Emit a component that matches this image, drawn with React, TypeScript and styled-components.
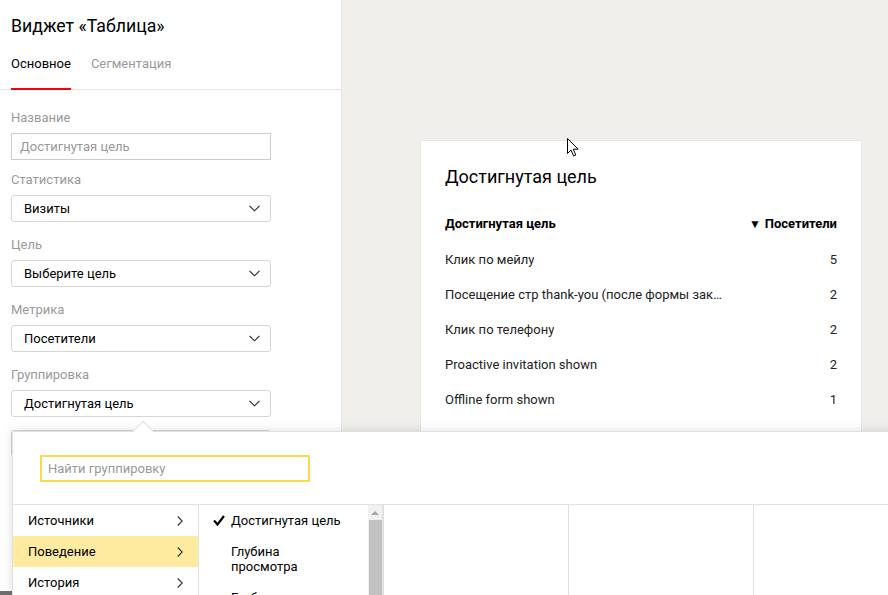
import React from 'react';
import styled, { createGlobalStyle } from 'styled-components';

const GlobalStyle = createGlobalStyle`
  html, body {
    margin: 0;
    padding: 0;
    overflow: hidden;
  }
  body {
    font-family: Roboto, "Liberation Sans", Arial, sans-serif;
    color: #000;
  }
  * {
    box-sizing: border-box;
  }
`;

const Page = styled.div`
  position: relative;
  display: flex;
  width: 888px;
  height: 595px;
  overflow: hidden;
`;

const Sidebar = styled.aside`
  display: flex;
  flex-direction: column;
  width: 342px;
  flex-shrink: 0;
  background: #fff;
  border-right: 1px solid #e6e6e6;
`;

const Title = styled.h1`
  margin: 0;
  padding: 16px 11px 0;
  font-size: 17.7px;
  line-height: 20px;
  font-weight: 400;
  color: #000;
`;

const Tabs = styled.div`
  display: flex;
  gap: 20px;
  padding: 0 11px;
  border-bottom: 1px solid #e6e6e6;
`;

const Tab = styled.div<{ $active?: boolean }>`
  padding: 18px 0 14px;
  margin-bottom: -1px;
  font-size: 13px;
  line-height: 20px;
  color: ${p => (p.$active ? '#000' : '#999')};
  border-bottom: 2px solid ${p => (p.$active ? '#f00' : 'transparent')};
`;

const Form = styled.div`
  padding: 18px 11px 0;
`;

const Field = styled.div<{ $gap?: number }>`
  display: flex;
  flex-direction: column;
  width: 260px;
  margin-bottom: ${p => p.$gap ?? 13}px;
`;

const Label = styled.div`
  font-size: 13px;
  line-height: 20px;
  color: #999;
  margin-bottom: 5px;
`;

const TextInput = styled.div`
  height: 27px;
  padding: 0 8px;
  border: 1px solid #ccc;
  font-size: 13px;
  line-height: 25px;
  color: #999;
`;

const Select = styled.div`
  display: flex;
  align-items: center;
  justify-content: space-between;
  height: 27px;
  padding: 0 10px 0 12px;
  border: 1px solid #d6d6d6;
  border-radius: 3px;
  font-size: 13px;
  color: #000;
`;

const SidebarFooter = styled.div`
  margin-top: auto;
  width: 12px;
  height: 4px;
  background: #6f6f6f;
`;

const Main = styled.main`
  flex: 1;
  background: #f0efec;
  padding: 141px 0 0 79px;
`;

const Card = styled.section`
  width: 440px;
  height: 320px;
  background: #fff;
  box-shadow: 0 0 0 1px #e8e7e4;
  padding: 24px 24px 0;
`;

const CardTitle = styled.h2`
  margin: 0 0 17px;
  font-size: 18px;
  line-height: 24px;
  font-weight: 400;
  color: #000;
`;

const Row = styled.div<{ $head?: boolean }>`
  display: flex;
  justify-content: space-between;
  align-items: center;
  height: 35px;
  font-size: 13px;
  font-weight: ${p => (p.$head ? 700 : 400)};
  color: ${p => (p.$head ? '#000' : '#222')};
  margin-bottom: ${p => (p.$head ? 1 : 0)}px;
`;

const NameCell = styled.span`
  max-width: 282px;
  white-space: nowrap;
  overflow: hidden;
  text-overflow: ellipsis;
`;

const SortMark = styled.span`
  font-size: 12px;
  margin-right: 4px;
`;

const Popup = styled.div`
  position: absolute;
  left: 12px;
  top: 431px;
  width: 1000px;
  bottom: -2px;
  background: #fff;
  border: 1px solid #e0e0e0;
  box-shadow: 0 0 10px rgba(0, 0, 0, 0.13);

  &::before {
    content: '';
    position: absolute;
    left: 122px;
    top: -8px;
    width: 15px;
    height: 15px;
    background: #fff;
    border-left: 1px solid #e0e0e0;
    border-top: 1px solid #e0e0e0;
    transform: rotate(45deg);
  }
`;

const SearchBar = styled.div`
  position: relative;
  height: 73px;
  padding: 23px 0 0 27px;
  border-bottom: 1px solid #e3e3e3;
  background: #fff;
`;

const SearchInput = styled.div`
  width: 270px;
  height: 27px;
  padding: 0 6px;
  border: 2px solid #fdd94c;
  font-size: 13px;
  line-height: 23px;
  color: #999;
`;

const Columns = styled.div`
  display: flex;
  height: 100%;
`;

const Column = styled.div<{ $border?: boolean }>`
  display: flex;
  width: 185px;
  flex-shrink: 0;
  border-left: ${p => (p.$border ? '1px solid #e0e0e0' : 'none')};
`;

const List = styled.div`
  flex: 1;
`;

const Category = styled.div<{ $active?: boolean }>`
  display: flex;
  align-items: center;
  justify-content: space-between;
  height: 31px;
  padding: 0 15px;
  font-size: 13px;
  color: #000;
  background: ${p => (p.$active ? '#ffeba0' : 'transparent')};
`;

const Option = styled.div`
  display: flex;
  align-items: flex-start;
  padding: 8px 8px 8px 14px;
  font-size: 13px;
  line-height: 15px;
  color: #000;
`;

const CheckSlot = styled.span`
  display: inline-flex;
  width: 18px;
  flex-shrink: 0;
  padding-top: 2px;
`;

const ScrollTrack = styled.div`
  display: flex;
  flex-direction: column;
  align-items: center;
  width: 15px;
  background: #f1f1f1;
  border-right: 1px solid #e0e0e0;
`;

const ScrollArrow = styled.div`
  margin: 6px 0 5px;
  width: 0;
  height: 0;
  border-left: 4px solid transparent;
  border-right: 4px solid transparent;
  border-bottom: 4px solid #a3a3a3;
`;

const ScrollThumb = styled.div`
  width: 13px;
  flex: 1;
  background: #c1c1c1;
`;

const Cursor = styled.svg`
  position: absolute;
  left: 567px;
  top: 138px;
`;

const Chevron = () => (
  <svg width="11" height="7" viewBox="0 0 11 7">
    <polyline points="0.5,0.8 5.5,5.8 10.5,0.8" fill="none" stroke="#222" strokeWidth="1.1" />
  </svg>
);

const ChevronRight = () => (
  <svg width="6" height="10" viewBox="0 0 6 10">
    <polyline points="0.7,0.5 5.2,5 0.7,9.5" fill="none" stroke="#333" strokeWidth="1.1" />
  </svg>
);

const Check = () => (
  <svg width="12" height="11" viewBox="0 0 12 11">
    <path d="M1 5.5 L4.5 9.5 L11 1" fill="none" stroke="#000" strokeWidth="2.2" />
  </svg>
);

const rows: [string, number][] = [
  ['Клик по мейлу', 5],
  ['Посещение стр thank-you (после формы заказа звонка)', 2],
  ['Клик по телефону', 2],
  ['Proactive invitation shown', 2],
  ['Offline form shown', 1],
];

const fields: { label: string; value: string }[] = [
  { label: 'Статистика', value: 'Визиты' },
  { label: 'Цель', value: 'Выберите цель' },
  { label: 'Метрика', value: 'Посетители' },
  { label: 'Группировка', value: 'Достигнутая цель' },
];

const App: React.FC = () => {
  return (
    <>
      <GlobalStyle />
      <Page>
        <Sidebar>
          <Title>Виджет «Таблица»</Title>
          <Tabs>
            <Tab $active>Основное</Tab>
            <Tab>Сегментация</Tab>
          </Tabs>
          <Form>
            <Field $gap={10}>
              <Label>Название</Label>
              <TextInput>Достигнутая цель</TextInput>
            </Field>
            {fields.map(f => (
              <Field key={f.label}>
                <Label>{f.label}</Label>
                <Select>
                  {f.value}
                  <Chevron />
                </Select>
              </Field>
            ))}
            <Field>
              <Select />
            </Field>
          </Form>
          <SidebarFooter />
        </Sidebar>
        <Main>
          <Card>
            <CardTitle>Достигнутая цель</CardTitle>
            <Row $head>
              <span>Достигнутая цель</span>
              <span>
                <SortMark>▼</SortMark>Посетители
              </span>
            </Row>
            {rows.map(([name, value]) => (
              <Row key={name}>
                <NameCell>{name}</NameCell>
                <span>{value}</span>
              </Row>
            ))}
          </Card>
        </Main>

        <Popup>
          <SearchBar>
            <SearchInput>Найти группировку</SearchInput>
          </SearchBar>
          <Columns>
            <Column>
              <List>
                <Category>
                  Источники
                  <ChevronRight />
                </Category>
                <Category $active>
                  Поведение
                  <ChevronRight />
                </Category>
                <Category>
                  История
                  <ChevronRight />
                </Category>
              </List>
            </Column>
            <Column $border>
              <List>
                <Option>
                  <CheckSlot>
                    <Check />
                  </CheckSlot>
                  Достигнутая цель
                </Option>
                <Option>
                  <CheckSlot />
                  Глубина
                  <br />
                  просмотра
                </Option>
                <Option>
                  <CheckSlot />
                  Глубина страниц
                </Option>
              </List>
              <ScrollTrack>
                <ScrollArrow />
                <ScrollThumb />
              </ScrollTrack>
            </Column>
            <Column $border />
            <Column $border />
            <Column $border />
          </Columns>
        </Popup>

        <Cursor width="13" height="20" viewBox="0 0 13 20">
          <path
            d="M0.5 0.5 L0.5 15.5 L4 12 L6.6 18 L8.8 17 L6.3 11.2 L11.2 11.2 Z"
            fill="#fff"
            stroke="#000"
            strokeWidth="1"
            strokeLinejoin="round"
          />
        </Cursor>
      </Page>
    </>
  );
};

export default App;
